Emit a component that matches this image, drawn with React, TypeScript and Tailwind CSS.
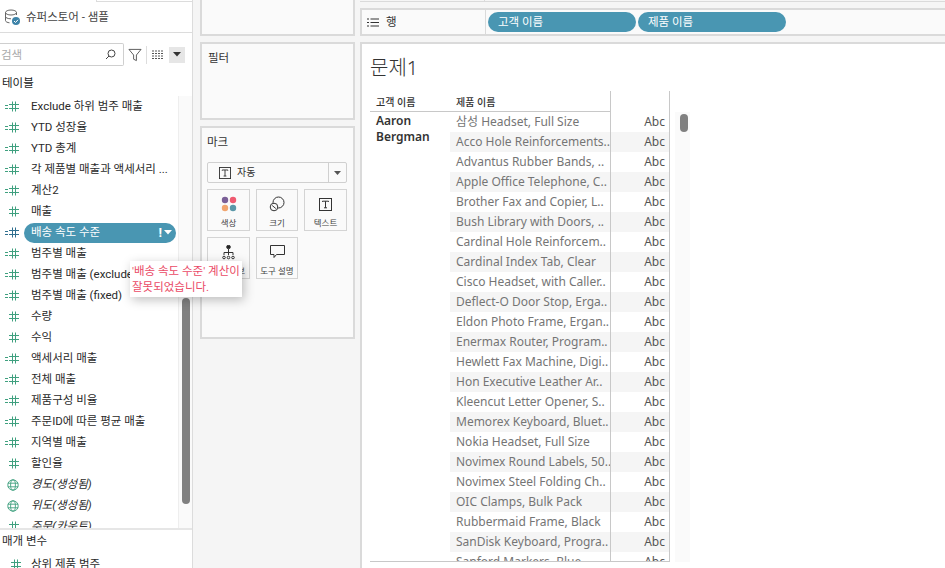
import type { ReactNode } from "react";

const KR = "font-['Roboto','Noto_Sans_CJK_KR',sans-serif]";
const TABLE = "font-['Noto_Sans','Noto_Sans_CJK_KR',sans-serif]";

type FieldKind = "calc" | "num" | "geo";

interface Field {
  name: string;
  kind: FieldKind;
  italic?: boolean;
}

const fields: Field[] = [
  { name: "Exclude 하위 범주 매출", kind: "calc" },
  { name: "YTD 성장율", kind: "calc" },
  { name: "YTD 총계", kind: "calc" },
  { name: "각 제품별 매출과 액세서리 ...", kind: "calc" },
  { name: "계산2", kind: "calc" },
  { name: "매출", kind: "num" },
  { name: "배송 속도 수준", kind: "calc" },
  { name: "범주별 매출", kind: "calc" },
  { name: "범주별 매출 (exclude)", kind: "calc" },
  { name: "범주별 매출 (fixed)", kind: "calc" },
  { name: "수량", kind: "num" },
  { name: "수익", kind: "num" },
  { name: "액세서리 매출", kind: "calc" },
  { name: "전체 매출", kind: "calc" },
  { name: "제품구성 비율", kind: "calc" },
  { name: "주문ID에 따른 평균 매출", kind: "calc" },
  { name: "지역별 매출", kind: "calc" },
  { name: "할인율", kind: "num" },
  { name: "경도(생성됨)", kind: "geo", italic: true },
  { name: "위도(생성됨)", kind: "geo", italic: true },
  { name: "주문(카운트)", kind: "num", italic: true },
];

const products = [
  "삼성 Headset, Full Size",
  "Acco Hole Reinforcements..",
  "Advantus Rubber Bands, ..",
  "Apple Office Telephone, C..",
  "Brother Fax and Copier, L..",
  "Bush Library with Doors, ..",
  "Cardinal Hole Reinforcem..",
  "Cardinal Index Tab, Clear",
  "Cisco Headset, with Caller..",
  "Deflect-O Door Stop, Erga..",
  "Eldon Photo Frame, Ergan..",
  "Enermax Router, Program..",
  "Hewlett Fax Machine, Digi..",
  "Hon Executive Leather Ar..",
  "Kleencut Letter Opener, S..",
  "Memorex Keyboard, Bluet..",
  "Nokia Headset, Full Size",
  "Novimex Round Labels, 50..",
  "Novimex Steel Folding Ch..",
  "OIC Clamps, Bulk Pack",
  "Rubbermaid Frame, Black",
  "SanDisk Keyboard, Progra..",
  "Sanford Markers, Blue",
];

function HashIcon({ color }: { color: string }) {
  return (
    <svg width="10" height="11" viewBox="0 0 10 11" fill="none" stroke={color} strokeWidth="1">
      <path d="M3.5 0.5V10.5M6.5 0.5V10.5M0 3.5H10M0 7.5H10" />
    </svg>
  );
}

function FieldIcon({ kind, active }: { kind: FieldKind; active?: boolean }) {
  const color = active ? "#2f6f8f" : "#3fa07f";
  if (kind === "geo") {
    return (
      <div className="flex w-[19px] justify-end">
        <svg width="12" height="12" viewBox="0 0 12 12" fill="none" stroke={color} strokeWidth="0.9">
          <circle cx="6" cy="6" r="5.2" />
          <ellipse cx="6" cy="6" rx="2.4" ry="5.2" />
          <path d="M0.8 4.2H11.2M0.8 7.8H11.2" />
        </svg>
      </div>
    );
  }
  return (
    <div className="flex w-[19px] items-center justify-end gap-[1px]">
      {kind === "calc" && (
        <svg width="3" height="4" viewBox="0 0 3 4" stroke={color} strokeWidth="1">
          <path d="M0 0.5H3M0 3.5H3" />
        </svg>
      )}
      <HashIcon color={color} />
    </div>
  );
}

function FieldRow({ field }: { field: Field }) {
  if (field.name === "배송 속도 수준") {
    return (
      <div className="flex h-[21px] shrink-0 items-center">
        <FieldIcon kind="calc" active />
        <div className="ml-[5px] flex h-[20px] w-[152px] items-center rounded-full bg-[#4996b2] pl-[7px] pr-[4px] text-white">
          <span className="flex-1">배송 속도 수준</span>
          <span className="text-[13px] font-bold leading-none">!</span>
          <svg className="ml-[2px]" width="8" height="5" viewBox="0 0 8 5" fill="white">
            <path d="M0 0H8L4 4.5Z" />
          </svg>
        </div>
      </div>
    );
  }
  return (
    <div className="flex h-[21px] shrink-0 items-center">
      <FieldIcon kind={field.kind} />
      <span className={`ml-[12px] whitespace-nowrap ${field.italic ? "italic" : ""}`}>{field.name}</span>
    </div>
  );
}

function MarkButton({ label, icon }: { label: string; icon: ReactNode }) {
  return (
    <div className="flex h-[42px] flex-col items-center border border-[#d4d4d4] pt-[6px] text-[8.5px] leading-none text-[#444]">
      <div className="flex h-[16px] items-center justify-center">{icon}</div>
      <span className="mt-[7px] whitespace-nowrap">{label}</span>
    </div>
  );
}

function TextMarkIcon({ size = 13 }: { size?: number }) {
  return (
    <svg width={size} height={size} viewBox="0 0 13 13" fill="none" stroke="#333" strokeWidth="1">
      <rect x="0.5" y="0.5" width="12" height="12" />
      <path d="M3.5 4V3.2H9.5V4M6.5 3.2V9.8M5 9.8H8" />
    </svg>
  );
}

function ShelfPill({ label }: { label: string }) {
  return (
    <div className="flex h-[20px] w-[148px] items-center rounded-full bg-[#4996b2] pl-[10px] pt-px text-[11.5px] text-white">
      {label}
    </div>
  );
}

export default function App() {
  return (
    <div className={`relative flex h-[568px] w-[945px] overflow-hidden bg-[#f5f5f5] text-[11.5px] text-[#2a2a2a] ${KR}`}>
      {/* data pane */}
      <div className="flex h-full w-[193px] shrink-0 flex-col border-r border-[#dcdcdc] bg-white">
        <div className="ml-[96px] h-[2px] shrink-0 border-b border-l border-[#dcdcdc]" />
        <div className="flex h-[31px] shrink-0 items-center gap-[5px] border-b border-[#dcdcdc] pl-[4px] text-[#444]">
          <svg width="17" height="17" viewBox="0 0 17 17" fill="none">
            <ellipse cx="7" cy="3.5" rx="5.5" ry="2.5" stroke="#666" />
            <path d="M1.5 3.5V11.5C1.5 12.8 3.5 13.6 5.5 13.8M12.5 3.5V6M1.5 7.5C1.5 8.8 3.8 9.8 7 9.8" stroke="#666" />
            <circle cx="12" cy="12" r="4" fill="#3d83a8" />
            <path d="M10 12L11.5 13.5L14 10.8" stroke="white" />
          </svg>
          <span className="pt-[2px]">슈퍼스토어 - 샘플</span>
        </div>
        <div className="mt-[10px] flex h-[23px] shrink-0 items-center">
          <div className="flex h-[23px] w-[124px] items-center justify-between rounded-r-[2px] border border-l-0 border-[#cfcfcf] pl-px pr-[7px] text-[#aaa]">
            <span className="pt-[2px]">검색</span>
            <svg width="11" height="11" viewBox="0 0 11 11" fill="none" stroke="#444" strokeWidth="1">
              <circle cx="6.5" cy="4.5" r="3.5" />
              <path d="M4 7L1 10" />
            </svg>
          </div>
          <svg className="ml-[4px]" width="14" height="14" viewBox="0 0 15 14" fill="none" stroke="#555" strokeWidth="1">
            <path d="M1 1H14L9 7V13L6 11.5V7Z" />
          </svg>
          <div className="ml-[4px] h-[18px] w-px bg-[#ddd]" />
          <svg className="ml-[5px]" width="12" height="10" viewBox="0 0 12 10" stroke="#555" strokeWidth="1" strokeDasharray="2 1">
            <path d="M0 1H12M0 3.5H12M0 6H12M0 8.5H12" />
          </svg>
          <div className="ml-[5px] flex h-[16px] w-[16px] items-center justify-center bg-[#e6e6e6]">
            <svg width="8" height="5" viewBox="0 0 8 5" fill="#333">
              <path d="M0 0H8L4 4.5Z" />
            </svg>
          </div>
        </div>
        <div className="ml-[2px] mt-[9px] h-[16px] shrink-0 text-[#222]">테이블</div>
        <div className="mt-[5px] flex min-h-0 flex-1">
          <div className="flex min-w-0 flex-1 flex-col overflow-hidden">
            {fields.map((field) => (
              <FieldRow key={field.name} field={field} />
            ))}
          </div>
          <div className="flex w-[14px] shrink-0 flex-col border-l border-[#eeeeee] bg-[#fafafa] pl-[3px] pt-[202px]">
            <div className="h-[206px] w-[8px] rounded-full bg-[#808080]" />
          </div>
        </div>
        <div className="h-[40px] shrink-0 overflow-hidden border-t-2 border-[#e6e6e6] pl-[2px] pt-[3px]">
          <div>매개 변수</div>
          <div className="mt-[6px] flex items-center">
            <FieldIcon kind="num" />
            <span className="ml-[10px] whitespace-nowrap">상위 제품 범주</span>
          </div>
        </div>
      </div>

      {/* pages, filters and marks */}
      <div className="ml-[7px] flex w-[155px] shrink-0 flex-col gap-[6px]">
        <div className="h-[36px] shrink-0 border-x-2 border-b-2 border-[#dadada] bg-[#fafafa]" />
        <div className="h-[78px] shrink-0 border-2 border-[#dadada] bg-[#fafafa] pl-[6px] pt-[6px] text-[#333]">필터</div>
        <div className="h-[213px] shrink-0 border-2 border-[#dadada] bg-[#fafafa] px-[5px] pt-[6px] text-[#333]">
          <div className="h-[28px]">마크</div>
          <div className="flex h-[21px] w-[140px] items-center rounded-[2px] border border-[#d0d0d0] pl-[11px] text-[10px]">
            <TextMarkIcon size={12} />
            <span className="ml-[6px] flex-1">자동</span>
            <div className="flex h-full w-[18px] items-center justify-center border-l border-[#d0d0d0]">
              <svg width="7" height="4" viewBox="0 0 7 4" fill="#555">
                <path d="M0 0H7L3.5 4Z" />
              </svg>
            </div>
          </div>
          <div className="mt-[6px] grid w-[140px] grid-cols-[43px_42px_43px] gap-x-[6px] gap-y-[6px]">
            <MarkButton
              label="색상"
              icon={
                <svg width="16" height="16" viewBox="0 0 16 16">
                  <circle cx="4" cy="4" r="3.2" fill="#7a5f97" />
                  <circle cx="12" cy="4" r="3.2" fill="#ef5a70" />
                  <circle cx="4" cy="12" r="3.2" fill="#f1a56f" />
                  <circle cx="12" cy="12" r="3.2" fill="#5a97a8" />
                </svg>
              }
            />
            <MarkButton
              label="크기"
              icon={
                <svg width="16" height="16" viewBox="0 0 16 16" fill="none" stroke="#333" strokeWidth="1">
                  <circle cx="9.5" cy="6.5" r="5.5" />
                  <circle cx="5" cy="11" r="3.8" fill="#fafafa" />
                  <path d="M3.2 9.5L6.8 12.5" />
                </svg>
              }
            />
            <MarkButton label="텍스트" icon={<TextMarkIcon />} />
            <MarkButton
              label="세부 정보"
              icon={
                <svg width="13" height="15" viewBox="0 0 13 15" fill="none" stroke="#333" strokeWidth="1">
                  <circle cx="6.5" cy="2" r="1.8" fill="#222" />
                  <path d="M6.5 4V10M2 10V7.5H11V10" />
                  <circle cx="2" cy="12.5" r="1.3" />
                  <circle cx="6.5" cy="12.5" r="1.3" />
                  <circle cx="11" cy="12.5" r="1.3" />
                </svg>
              }
            />
            <MarkButton
              label="도구 설명"
              icon={
                <svg width="15" height="14" viewBox="0 0 15 14" fill="none" stroke="#333" strokeWidth="1">
                  <path d="M0.5 0.5H14.5V9.5H6.5L4 12.5V9.5H0.5Z" />
                </svg>
              }
            />
          </div>
        </div>
      </div>

      {/* shelves and view */}
      <div className="ml-[5px] flex min-w-0 flex-1 flex-col">
        <div className="h-[2px] shrink-0 border-b border-[#dadada]">
          <div className="h-px w-[125px] border-r border-[#dadada]" />
        </div>
        <div className="mt-[6px] flex h-[28px] shrink-0 items-center border-y-2 border-l-2 border-[#dadada] bg-[#fafafa]">
          <div className="flex h-full w-[124px] items-center gap-[7px] border-r border-[#dadada] pl-[5px] text-[#333]">
            <svg width="12" height="9" viewBox="0 0 12 9" stroke="#333" strokeWidth="1.2">
              <path d="M0 1H2M3.5 1H12M0 4.5H2M3.5 4.5H12M0 8H2M3.5 8H12" />
            </svg>
            <span className="pt-px">행</span>
          </div>
          <div className="ml-[2px] flex gap-[2px]">
            <ShelfPill label="고객 이름" />
            <ShelfPill label="제품 이름" />
          </div>
        </div>
        <div className="mt-[6px] flex min-h-0 flex-1 flex-col border-l-2 border-t-2 border-[#dadada] bg-white pl-[8px]">
          <div className={`h-[47px] shrink-0 pt-[11px] text-[20px] font-light leading-[26px] text-[#333] ${TABLE}`}>문제1</div>
          <div className={`flex h-[471px] shrink-0 ${TABLE}`}>
            <div className="flex w-[300px] shrink-0 flex-col overflow-hidden border-b border-[#c8c8c8]">
              <div className="flex h-[21px] shrink-0">
                <div className="w-[80px] shrink-0 border-b border-[#c8c8c8] pl-[6px] pt-px text-[10px] font-medium leading-[20px] text-[#333]">고객 이름</div>
                <div className="w-[160px] shrink-0 border-b border-[#c8c8c8] pl-[6px] pt-px text-[10px] font-medium leading-[20px] text-[#333]">제품 이름</div>
                <div className="w-[60px] shrink-0 border-x border-[#c8c8c8]" />
              </div>
              <div className="flex min-h-0 flex-1">
                <div className="w-[80px] shrink-0 pl-[6px] pt-px text-[12px] font-semibold leading-[16px] text-[#333]">
                  Aaron
                  <br />
                  Bergman
                </div>
                <div className="min-w-0 flex-1">
                  {products.map((product, i) => (
                    <div key={product} className={`flex h-[20px] items-center text-[12px] leading-[20px] ${i % 2 === 1 ? "bg-[#f5f5f5]" : ""}`}>
                      <div className="h-[20px] w-[160px] shrink-0 overflow-hidden whitespace-nowrap pl-[6px] text-[#757575]">{product}</div>
                      <div className="flex h-full w-[60px] shrink-0 justify-end border-x border-[#c8c8c8] pr-[4px] text-[#555]">Abc</div>
                    </div>
                  ))}
                </div>
              </div>
            </div>
            <div className="ml-[5px] mt-[21px] h-[450px] w-[15px] bg-[#fafafa] pl-[5px] pt-[2px]">
              <div className="h-[18px] w-[8px] rounded-full bg-[#808080]" />
            </div>
          </div>
        </div>
      </div>

      {/* error tooltip over the field list */}
      <div className="absolute left-[130px] top-[261px] h-[36px] w-[112px] whitespace-nowrap bg-white pl-[2px] pt-[2px] text-[11.5px] leading-[16px] text-[#ea4a66] shadow-[2px_3px_10px_rgba(0,0,0,0.25)]">
        '배송 속도 수준' 계산이
        <br />
        잘못되었습니다.
      </div>
    </div>
  );
}
